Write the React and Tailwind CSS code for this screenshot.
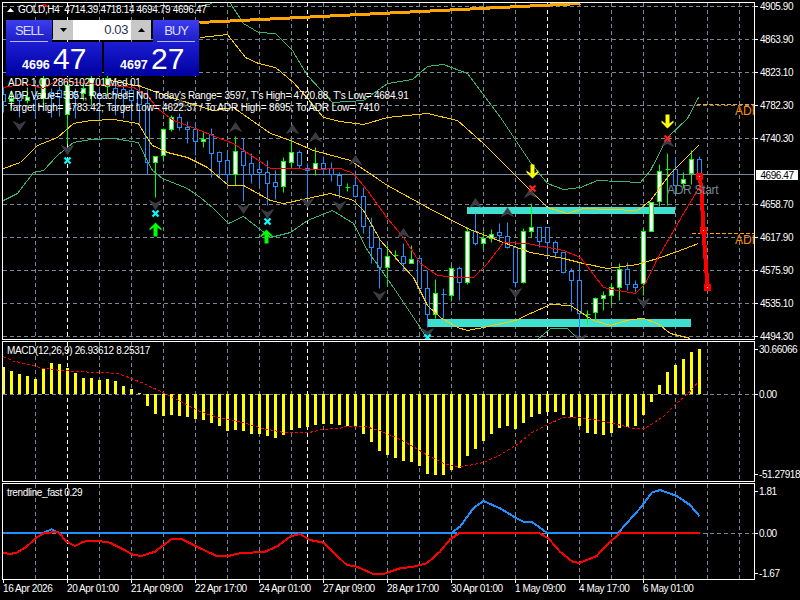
import React from "react";

const GREY_X = [35,99,131,163,195,227,259,291,323,355,387,419,451,483,515,579,611,643,675,707,739];
const WHITE_X = [67,307,547];
const MAIN_Y = [6,39,72,105,138,204,237,270,303,336];

const pts = (a) => a.map((p) => p.join(",")).join(" ");
const zz = (a, ox, oy) => a.map(([x, y]) => [x / 3 + ox, y / 3 + oy]);

// k, wickTop, bodyTop, bodyBottom, wickBottom, up
const CANDLES = [
[0,86,94,101,112,0],[1,90,98,101,108,1],[2,91,94,100,117,0],[3,87,97,100,103,1],[4,90,95,99,118,0],[5,75,78,98,104,1],[6,88,92,96,117,0],[7,86,90,97,116,0],[8,80,85,114,143,1],
[9,88,92,96,118,0],[10,84,88,93,100,1],[11,75,78,95,105,1],[12,88,94,98,120,0],[13,75,78,86,95,1],[14,82,88,94,115,0],[15,82,89,96,118,0],[16,84,90,100,120,0],[17,86,92,104,123,0],[18,88,103,162,174,0],
[19,156,156,162,197,1],[20,128,129,155,161,1],[21,115,117,129,131,1],[22,113,117,127,130,0],[23,121,127,129,143,0],[24,122,129,141,155,0],[25,132,139,141,147,1],[26,128,134,153,177,0],[27,151,152,161,178,0],[28,151,160,174,183,0],[29,136,151,174,185,1],[30,138,151,165,201,0],[31,153,163,174,183,0],[32,159,169,172,185,0],[33,160,172,183,205,0],
[34,170,182,186,199,0],[35,157,161,186,192,1],[36,139,152,162,167,1],[37,150,152,165,168,0],[38,163,168,170,200,0],[39,147,163,169,175,1],[40,156,163,168,175,0],[41,162,168,174,181,0],[42,172,175,185,198,0],[43,183,187,187,191,1],[44,170,185,196,197,0],[45,187,196,226,233,0],[46,217,226,247,263,0],[47,237,248,267,288,0],[48,245,256,267,285,1],[49,250,255,255,259,1],[50,243,256,263,271,0],[51,245,259,263,263,1],[52,258,258,288,290,0],[53,270,288,314,327,0],[54,279,293,314,318,1],[55,288,294,294,318,0],[56,265,268,295,301,1],[57,266,268,282,300,0],[58,227,231,282,284,1],[59,213,231,243,245,0],[60,231,238,243,249,1],[61,229,234,238,242,1],[62,223,232,235,242,0],[63,222,236,247,248,0],[64,247,247,282,287,0],[65,228,231,282,283,1],[66,203,227,231,237,1],
[67,227,227,241,247,0],[68,227,227,242,257,0],[69,240,242,252,258,0],[70,252,252,272,273,0],[71,268,271,280,311,0],[72,265,280,313,335,0],[73,310,314,314,323,1],[74,297,298,312,320,1],[75,291,295,298,310,1],[76,283,287,295,305,1],[77,263,269,287,300,1],[78,262,269,284,290,0],[79,280,284,287,292,0],[80,228,231,283,295,1],[81,202,202,231,231,1],[82,164,171,201,206,1],[83,153,169,169,205,1],[84,157,169,185,193,0],[85,172,179,183,188,1],[86,150,159,173,184,1],[87,156,159,176,185,0],
];

const MACD = [27,23,20,18,15,26,31,30,26,21,16,16,14,15,13,8,5,1,-12,-20,-22,-21,-22,-23,-25,-26,-29,-32,-37,-36,-37,-40,-40,-42,-44,-41,-36,-34,-33,-31,-30,-30,-31,-32,-33,-40,-48,-57,-61,-64,-67,-68,-72,-80,-81,-81,-76,-74,-62,-55,-47,-40,-34,-32,-35,-29,-23,-20,-18,-18,-21,-23,-32,-39,-40,-41,-39,-34,-33,-32,-21,-8,9,22,29,35,42,45];

const SIGNAL = [
 ...zz([[10,50],[40,63],[100,77],[130,85],[180,91],[240,95],[300,98],[350,100],[380,110],[430,130],[490,158],[530,178],[590,210],[650,232],[720,245],[790,266],[850,277],[930,277],[970,268],[1020,265],[1040,258],[1090,258],[1140,272],[1200,298]],0,340),
 ...zz([[40,320],[90,350],[130,370],[180,381],[250,368],[300,345],[350,315],[400,275],[450,250],[490,233],[530,232],[590,240],[650,253],[700,265],[735,265],[790,230],[830,190],[870,155],[895,125]],400,340),
];

const T_RED = [
 ...zz([[8,218],[30,222],[50,218],[80,200],[110,172],[135,158],[175,157],[200,185],[225,198],[250,185],[290,182],[330,188],[370,208],[400,225],[425,228],[465,215],[515,177],[545,177],[590,200],[650,228],[690,227],[710,221],[795,215],[830,200],[870,170],[900,162],[930,180],[970,188],[1040,255],[1070,260],[1120,282],[1150,282],[1200,265]],0,480),
 ...zz([[40,260],[80,250],[120,215],[150,178],[180,158],[415,158],[445,175],[480,215],[520,247],[540,248],[590,228],[620,195],[660,160],[900,158]],400,480),
];
const T_BLUE1 = zz([[0,158],[130,158],[155,148],[175,158],[1370,158]],0,480);
const T_BLUE2 = zz([[155,158],[180,140],[220,85],[250,63],[300,85],[350,115],[370,125],[395,125],[440,158],[655,158],[720,85],[755,38],[780,30],[830,48],[870,75],[898,108]],400,480);

const GREEN_UP = [[230,3],[243,23],[258,32],[275,33],[292,50],[307,75],[332,102],[363,100],[387,83],[412,79],[427,66],[443,64],[467,73],[500,117],[530,162],[547,183],[563,189],[580,187],[597,180],[640,182],[650,170],[667,137],[687,118],[698,97]];
const GREEN_TOP = [[198,6],[212,3]];
const YEL_UP = [[200,37],[227,34],[245,57],[258,63],[275,67],[293,82],[307,98],[323,117],[340,121],[363,124],[387,117],[427,113],[457,120],[483,143],[517,177],[530,190],[547,207],[567,213],[583,208],[637,210],[650,200],[670,173],[698,145]];
const YEL_MID = [[110,80],[140,86],[180,100],[213,110],[233,107],[270,133],[290,140],[313,150],[350,160],[387,185],[427,207],[467,228],[503,242],[530,252],[563,258],[583,263],[607,268],[637,264],[657,258],[677,251],[698,243]];
const YEL_LOW = [[3,168],[20,162],[37,145],[57,137],[73,123],[90,120],[113,119],[138,123],[145,135],[152,145],[167,152],[187,157],[207,167],[228,185],[243,185],[270,200],[283,203],[307,198],[330,193],[353,200],[363,210],[380,240],[400,263],[413,277],[427,305],[440,317],[457,327],[467,330],[483,327],[515,320],[530,313],[550,304],[570,305],[593,320],[610,325],[630,319],[643,318],[657,323],[670,333],[690,338]];
const GRN_LOW1 = [[3,200],[17,193],[33,172],[43,170],[57,155],[73,142],[90,139],[113,138],[138,142],[145,157],[152,170],[162,178],[187,188],[200,197],[213,208],[228,223],[243,216],[270,237],[290,232],[307,220],[332,210],[353,223],[367,250],[393,287],[417,323],[427,339]];
const GRN_LOW2 = [[537,339],[550,328],[567,328],[578,339]];
const RED_MA = [[3,87],[25,83],[43,88],[60,78],[75,82],[100,84],[133,87],[147,95],[157,108],[173,120],[200,130],[217,137],[233,143],[270,168],[290,168],[313,169],[340,168],[353,173],[367,190],[387,218],[403,237],[420,263],[437,275],[457,277],[473,277],[487,263],[503,242],[527,243],[563,250],[580,257],[603,287],[617,290],[635,293],[645,283],[657,258],[682,215],[700,185]];

const DOWN_ARROWS = [[19,125],[67,149],[155,204],[243,208],[267,213],[307,202],[339,205],[379,295],[427,332],[515,292],[643,302],[580,338]];
const UP_ARROWS = [[235,127],[180,103],[292,129],[315,137],[355,160],[403,233],[475,203],[507,212],[530,193],[667,142]];
const CYAN_X = [[67,160],[155,213],[267,221],[427,337]];
const RED_X = [[532,188],[667,138]];

function Grid({ y1, y2 }) {
  return (
    <g>
      {GREY_X.map((x) => <line key={x} x1={x + 0.5} x2={x + 0.5} y1={y1} y2={y2} stroke="#778899" strokeDasharray="4 3" />)}
      {WHITE_X.map((x) => <line key={x} x1={x + 0.5} x2={x + 0.5} y1={y1} y2={y2} stroke="#ffffff" strokeDasharray="4 3" />)}
    </g>
  );
}

function Line({ p, c, w = 1, ...rest }) {
  return <polyline points={pts(p)} fill="none" stroke={c} strokeWidth={w} strokeLinejoin="round" shapeRendering="crispEdges" {...rest} />;
}

function MainChart() {
  return (
    <svg className="block" width="751" height="336" viewBox="3 3 751 336">
      <g>
        <Grid y1={3} y2={339} />
        {MAIN_Y.map((y) => <line key={y} x1={3} x2={754} y1={y + 0.5} y2={y + 0.5} stroke="#778899" strokeDasharray="4 3" />)}
        <rect x="467" y="207" width="208" height="7" fill="#40e0d0" />
        <rect x="427" y="319" width="264" height="8" fill="#40e0d0" />
        <line x1="3" x2="754" y1="174.5" y2="174.5" stroke="#778899" />
        <line x1="697" x2="754" y1="104.5" y2="104.5" stroke="#ffa500" strokeDasharray="4 2" />
        <line x1="692" x2="754" y1="233.5" y2="233.5" stroke="#ffa500" strokeDasharray="4 2" />
      </g>
      <g transform="translate(0.5 0.5)">
        {CANDLES.map(([k, wt, bt, bb, wb, up]) => {
          const x = 3 + 8 * k;
          const col = up ? "#00ff00" : "#1e90ff";
          return (
            <g key={k}>
              <line x1={x} x2={x} y1={wt} y2={wb} stroke={col} />
              {bt === bb ? (
                <line x1={x - 2} x2={x + 3} y1={bt} y2={bt} stroke={col} />
              ) : (
                <rect x={x - 2} y={bt} width={4} height={bb - bt} fill={up ? "#ffffff" : "#000000"} stroke={col} />
              )}
            </g>
          );
        })}
        <Line p={GREEN_UP} c="#3cb371" />
        <Line p={GREEN_TOP} c="#3cb371" />
        <Line p={GRN_LOW1} c="#3cb371" />
        <Line p={GRN_LOW2} c="#3cb371" />
        <Line p={YEL_UP} c="#ffcc00" />
        <Line p={YEL_MID} c="#ffcc00" />
        <Line p={YEL_LOW} c="#ffcc00" />
        <Line p={RED_MA} c="#ff0000" />
        <polyline points="199,22 260,19 340,15 420,11 500,7 580,3" fill="none" stroke="#ffa500" strokeWidth="3" shapeRendering="crispEdges" />
        <path d="M39 7 Q43 2 47 6" fill="none" stroke="#ff0000" strokeWidth="1.5" />
        {DOWN_ARROWS.map(([x, y]) => (
          <polygon key={x + "d"} points={`${x - 6},${y - 4} ${x},${y - 1} ${x + 6},${y - 4} ${x},${y + 5}`} fill="#3a3a42" stroke="#55555c" strokeWidth="0.5" />
        ))}
        {UP_ARROWS.map(([x, y]) => (
          <polygon key={x + "u"} points={`${x},${y - 5} ${x + 6},${y + 4} ${x},${y + 1} ${x - 6},${y + 4}`} fill="#3a3a42" stroke="#55555c" strokeWidth="0.5" />
        ))}
        {CYAN_X.map(([x, y]) => (
          <path key={x} d={`M${x - 3} ${y - 3}L${x + 3} ${y + 3}M${x + 3} ${y - 3}L${x - 3} ${y + 3}`} stroke="#00ffff" strokeWidth="2.2" />
        ))}
        {RED_X.map(([x, y]) => (
          <path key={x} d={`M${x - 3} ${y - 3}L${x + 3} ${y + 3}M${x + 3} ${y - 3}L${x - 3} ${y + 3}`} stroke="#ff2020" strokeWidth="2" />
        ))}
        {[[155, 229], [266, 236]].map(([x, y]) => (
          <polygon key={x} points={`${x},${y - 7} ${x + 6},${y - 1} ${x + 6},${y + 1} ${x + 2},${y - 2} ${x + 2},${y + 7} ${x - 2},${y + 7} ${x - 2},${y - 2} ${x - 6},${y + 1} ${x - 6},${y - 1}`} fill="#00ff00" />
        ))}
        {[[532, 171], [667, 121]].map(([x, y]) => (
          <polygon key={x} points={`${x},${y + 7} ${x + 6},${y + 1} ${x + 6},${y - 1} ${x + 2},${y + 2} ${x + 2},${y - 7} ${x - 2},${y - 7} ${x - 2},${y + 2} ${x - 6},${y - 1} ${x - 6},${y + 1}`} fill="#ffff00" />
        ))}
        <polyline points="699,175 701,190 703,230 707,287" fill="none" stroke="#ff0000" strokeWidth="4" shapeRendering="crispEdges" />
        {[[699, 176], [703, 230], [707, 287]].map(([x, y]) => (
          <g key={x}>
            <rect x={x - 3.5} y={y - 3.5} width="7" height="7" fill="#ff0000" />
            <rect x={x - 0.5} y={y - 0.5} width="1" height="1" fill="#ffffff" />
          </g>
        ))}
      </g>
    </svg>
  );
}

function MacdChart() {
  return (
    <svg className="block" width="751" height="139" viewBox="3 342 751 139">
      <Grid y1={342} y2={481} />
      <line x1="3" x2="754" y1="394.5" y2="394.5" stroke="#778899" strokeDasharray="4 3" />
      {MACD.map((v, k) => (
        <rect key={k} x={2 + 8 * k} width="3" y={v >= 0 ? 394 - v : 394} height={Math.abs(v)} fill="#ffff00" />
      ))}
      <Line p={SIGNAL} c="#ff0000" strokeDasharray="3 2" />
    </svg>
  );
}

function TrendChart() {
  return (
    <svg className="block" width="751" height="95" viewBox="3 484 751 95">
      <Grid y1={484} y2={579} />
      <line x1="3" x2="754" y1="533.5" y2="533.5" stroke="#778899" strokeDasharray="4 3" />
      <Line p={T_BLUE1} c="#1e90ff" w={2} />
      <Line p={T_BLUE2} c="#1e90ff" w={2} />
      <Line p={T_RED} c="#ff0000" w={2} />
    </svg>
  );
}

function Axis({ items, top, left }) {
  return (
    <div className="relative flex-1 tracking-[-0.45px] text-white">
      {items.map(([label, y]) => (
        <div key={label} className="absolute left-0 flex h-[12px] items-center" style={{ top: y - top - 6 }}>
          <span className="h-px w-[3px] shrink-0 bg-white" style={{ marginRight: left }} />
          <span className="whitespace-nowrap">{label}</span>
        </div>
      ))}
    </div>
  );
}

function Quote({ small, big, className }) {
  return (
    <div className={`flex h-[34px] items-baseline bg-linear-to-b from-[#1c1cd2] to-[#0000a0] pl-[16px] pt-[1px] tracking-normal text-white ${className}`}>
      <span className="w-[31px] text-[12.5px] font-bold leading-[32px]">{small}</span>
      <span className="text-[30px] leading-[32px]">{big}</span>
    </div>
  );
}

function TradePanel() {
  const btn = "flex flex-col h-[22px] w-[46px] items-center bg-linear-to-b from-[#3c3cf0] to-[#1c1cc4] text-[13px] tracking-[-1px] text-[#dcdcff] leading-[21px]";
  return (
    <div className="absolute left-[3px] top-[17px] w-[193px]">
      <div className="flex h-[22px]">
        <div className={btn}>
          SELL
          <span className="h-px w-[38px] bg-[#b9b9f0]" />
        </div>
        <div className="ml-[1px] flex h-[20px] w-[98px] bg-white">
          <span className="flex w-[20px] items-center justify-center bg-[#c8c8c8]">
            <svg width="7" height="4"><polygon points="0,0 7,0 3.5,4" fill="#000" /></svg>
          </span>
          <span className="flex-1 pr-[3px] text-right text-[13px] leading-[20px] tracking-[-0.4px] text-[#283050]">0.03</span>
          <span className="flex w-[20px] items-center justify-center bg-[#c8c8c8]">
            <svg width="7" height="4"><polygon points="3.5,0 7,4 0,4" fill="#000" /></svg>
          </span>
        </div>
        <div className={`${btn} ml-auto`}>
          BUY
          <span className="h-px w-[38px] bg-[#b9b9f0]" />
        </div>
      </div>
      <div className="flex gap-[2px]">
        <Quote small="4696" big="47" className="w-[96px]" />
        <Quote small="4697" big="27" className="w-[95px]" />
      </div>
    </div>
  );
}

const TIMES = ["16 Apr 2026","20 Apr 01:00","21 Apr 09:00","22 Apr 17:00","24 Apr 01:00","27 Apr 09:00","28 Apr 17:00","30 Apr 01:00","1 May 09:00","4 May 17:00","6 May 01:00"];

export default function App() {
  return (
    <div className="h-[600px] w-[800px] overflow-hidden bg-black pl-[2px] pt-[2px] font-['Liberation_Sans',sans-serif] text-[10px] tracking-[-0.33px] text-white">
      <div className="flex h-[338px]">
        <div className="relative h-[338px] w-[753px] overflow-hidden border border-white">
          <MainChart />
          <svg className="absolute left-[4px] top-[5px]" width="7" height="4"><polygon points="3.5,0 7,4 0,4" fill="#fff" /></svg>
          <div className="absolute left-[15px] top-[1px] whitespace-nowrap leading-[12px] tracking-[-0.35px]">GOLD,H4&nbsp; 4714.39 4718.14 4694.79 4696.47</div>
          <TradePanel />
          <div className="absolute left-[5px] top-[74px] flex flex-col whitespace-nowrap leading-[12.5px]">
            <span className="tracking-[-0.2px]">ADR 1,00 2865102701 Med 01</span>
            <span className="tracking-[-0.22px]">ADR Value= 5851, Reached= No, Today's Range= 3597, T's High= 4720.88, T's Low= 4684.91</span>
            <span className="tracking-[-0.14px]">Target High= 4783.42; Target Low= 4622.37 / To ADR High= 8695; To ADR Low= 7410</span>
          </div>
          <span className="absolute left-[664px] top-[180px] text-[12px] leading-[14px] tracking-[-0.3px] text-[#778899]">ADR Start</span>
          <span className="absolute left-[732px] top-[101px] text-[12px] leading-[14px] tracking-normal text-[#ff8c00]">ADR</span>
          <span className="absolute left-[732px] top-[230px] text-[12px] leading-[14px] tracking-normal text-[#ff8c00]">ADR</span>
        </div>
        <div className="relative flex-1">
          <Axis
            top={2}
            left="2px"
            items={[["4905.90",6],["4863.90",39],["4823.10",72],["4782.30",105],["4740.30",138],["4658.70",204],["4617.90",237],["4575.90",270],["4535.10",303],["4494.30",336]]}
          />
          <div className="absolute left-[1px] top-[168px] flex h-[10px] w-[42px] items-center justify-center bg-white tracking-[-0.45px] text-black">4696.47</div>
        </div>
      </div>
      <div className="mt-px flex h-[141px]">
        <div className="relative h-[141px] w-[753px] overflow-hidden border border-white">
          <MacdChart />
          <span className="absolute left-[4px] top-[2px] whitespace-nowrap leading-[14px]">MACD(12,26,9) 26.93612 8.25317</span>
        </div>
        <Axis top={341} left="1px" items={[["30.66066",349],["0.00",394],["-51.27918",474]]} />
      </div>
      <div className="mt-px flex h-[97px]">
        <div className="relative h-[97px] w-[753px] overflow-hidden border border-white">
          <TrendChart />
          <span className="absolute left-[4px] top-[2px] whitespace-nowrap leading-[14px] tracking-[-0.37px]">trendline_fast 0.29</span>
        </div>
        <Axis top={483} left="1px" items={[["1.81",491],["0.00",533],["-1.67",573]]} />
      </div>
      <div className="flex pl-px tracking-[-0.42px]">
        {TIMES.map((t) => (
          <div key={t} className="relative h-[20px] w-[64px] whitespace-nowrap pt-[2px] leading-[14px]">
            <span className="absolute left-0 top-0 h-[3px] w-px bg-white" />
            {t}
          </div>
        ))}
      </div>
    </div>
  );
}
